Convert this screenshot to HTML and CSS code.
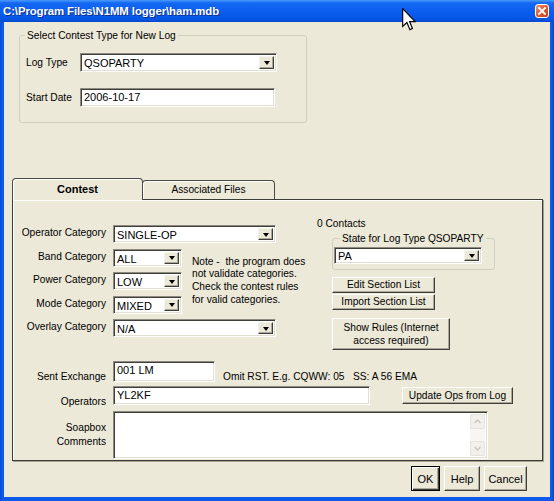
FILE: index.html
```html
<!DOCTYPE html>
<html>
<head>
<meta charset="utf-8">
<title>N1MM logger</title>
<link rel="stylesheet" href="styles.css">
</head>
<body>
<div class="window">
  <div class="titlebar">
    <span class="title">C:\Program Files\N1MM logger\ham.mdb</span>
    <span class="close"><svg width="8" height="8" viewBox="0 0 8 8"><path d="M1 1 L7 7 M7 1 L1 7" stroke="#fff" stroke-width="1.8" stroke-linecap="square"/></svg></span>
  </div>
  <div class="client">
    <fieldset class="group log-group">
      <legend>Select Contest Type for New Log</legend>
      <div class="form-grid">
        <span class="lbl">Log Type</span>
        <div class="combo combo-log"><span class="val">QSOPARTY</span><span class="drop"></span></div>
        <span class="lbl">Start Date</span>
        <div class="field field-date">2006-10-17</div>
      </div>
    </fieldset>

    <div class="tabs">
      <div class="tabstrip">
        <div class="tab tab-active">Contest</div>
        <div class="tab tab-files">Associated Files</div>
      </div>
      <div class="panel">
        <div class="upper">
          <div class="cats">
            <span class="cat-lbl r1">Operator Category</span>
            <div class="combo combo-wide r1"><span class="val">SINGLE-OP</span><span class="drop"></span></div>
            <span class="cat-lbl r2">Band Category</span>
            <div class="combo combo-small r2"><span class="val">ALL</span><span class="drop"></span></div>
            <p class="note">Note -&nbsp; the program does<br>not validate categories.<br>Check the contest rules<br>for valid categories.</p>
            <span class="cat-lbl r3">Power Category</span>
            <div class="combo combo-small r3"><span class="val">LOW</span><span class="drop"></span></div>
            <span class="cat-lbl r4">Mode Category</span>
            <div class="combo combo-small r4"><span class="val">MIXED</span><span class="drop"></span></div>
            <span class="cat-lbl r5">Overlay Category</span>
            <div class="combo combo-wide r5"><span class="val">N/A</span><span class="drop"></span></div>
          </div>
          <div class="side">
            <div class="contacts">0 Contacts</div>
            <fieldset class="group state-group">
              <legend>State for Log Type QSOPARTY</legend>
              <div class="combo combo-state"><span class="val">PA</span><span class="drop"></span></div>
            </fieldset>
            <button class="btn btn-section btn-edit">Edit Section List</button>
            <button class="btn btn-section btn-import">Import Section List</button>
            <button class="btn btn-rules">Show Rules (Internet<br>access required)</button>
          </div>
        </div>
        <div class="lower">
          <div class="row row-sent">
            <span class="row-lbl">Sent Exchange</span>
            <div class="field field-sent">001 LM</div>
            <span class="hint hint-omit">Omit RST. E.g. CQWW: 05</span>
            <span class="hint">SS: A 56 EMA</span>
          </div>
          <div class="row row-ops">
            <span class="row-lbl">Operators</span>
            <div class="field field-ops">YL2KF</div>
            <button class="btn btn-update">Update Ops from Log</button>
          </div>
          <div class="row row-soap">
            <span class="row-lbl">Soapbox<br>Comments</span>
            <div class="memo">
              <div class="memo-text"></div>
              <div class="vscroll">
                <span class="sb-btn"><svg width="7" height="5" viewBox="0 0 7 5"><path d="M0.5 4 L3.5 1 L6.5 4" fill="none" stroke="#C9C7BA" stroke-width="1.4"/></svg></span>
                <span class="sb-track"></span>
                <span class="sb-btn"><svg width="7" height="5" viewBox="0 0 7 5"><path d="M0.5 1 L3.5 4 L6.5 1" fill="none" stroke="#C9C7BA" stroke-width="1.4"/></svg></span>
              </div>
            </div>
          </div>
        </div>
      </div>
    </div>

    <div class="dlg-buttons">
      <button class="btn btn-default">OK</button>
      <button class="btn btn-help">Help</button>
      <button class="btn btn-cancel">Cancel</button>
    </div>
  </div>
  <svg class="cursor" width="14" height="23" viewBox="0 0 12 20"><path d="M0.5 0.5 L0.5 16 L4.2 12.6 L6.8 18.8 L9 17.8 L6.5 11.8 L11.3 11.8 Z" fill="#fff" stroke="#000" stroke-width="1" stroke-linejoin="miter"/></svg>
</div>
</body>
</html>
```

FILE: styles.css
```css
html, body {
  margin: 0;
  padding: 0;
  background: #0B52E0;
}
body {
  font-family: "Liberation Sans", Arial, sans-serif;
  font-size: 10.2px;
  color: #000;
}
.window {
  position: relative;
  width: 554px;
  height: 501px;
  box-sizing: border-box;
  display: flex;
  flex-direction: column;
  background: linear-gradient(to right, #0A47C8 0, #0B5AEC 2px, #0B5AEC 552px, #0A3FB8 554px);
  overflow: hidden;
}
.titlebar {
  flex: none;
  height: 22px;
  display: flex;
  align-items: center;
  padding: 0 5px 0 3px;
  background: linear-gradient(to bottom, #4A9AFB 0, #1468F2 3px, #0A5DEE 12px, #0656E6 19px, #0449CC 22px);
}
.title {
  flex: 1;
  color: #fff;
  font-weight: bold;
  font-size: 11.4px;
  letter-spacing: -0.1px;
  text-shadow: 1px 1px 0 #0A2F8C;
  margin-top: -1px;
}
.close {
  width: 14px;
  height: 14px;
  box-sizing: border-box;
  border: 1px solid #fff;
  border-radius: 3px;
  background: linear-gradient(to bottom right, #F0937A, #E05A35 50%, #C23E1C);
  display: flex;
  align-items: center;
  justify-content: center;
  margin-top: -1px;
}
.client {
  flex: 1;
  margin: 0 4px 4px 4px;
  background: #ECE9D8;
  display: flex;
  flex-direction: column;
}

/* group boxes */
.group {
  box-sizing: border-box;
  border: 1px solid #D0D0BF;
  border-radius: 3px;
  padding: 0;
  min-width: 0;
}
.group legend {
  padding: 0 2px;
  line-height: 13px;
  font-size: 10.2px;
}
.log-group {
  width: 288px;
  margin: 7px 0 0 15px;
  padding: 11px 0 15px 0;
}
.log-group legend { margin-left: 5px; }
.form-grid {
  display: grid;
  grid-template-columns: 54px auto;
  row-gap: 16px;
  margin-left: 6px;
  align-items: center;
}

/* sunken controls */
.combo, .field, .memo {
  box-sizing: border-box;
  background: #fff;
  border: 1px solid;
  border-color: #8E8C80 #FFFFFF #FFFFFF #8E8C80;
  box-shadow: inset 1px 1px 0 #3F3E38, inset -1px -1px 0 #E2DFD0;
}
.combo {
  display: flex;
  height: 19px;
  padding: 2px;
}
.combo .val {
  flex: 1;
  font-size: 11px;
  line-height: 14px;
  padding-left: 1px;
  white-space: nowrap;
}
.drop {
  flex: none;
  width: 15px;
  box-sizing: border-box;
  background: #ECE9D8;
  border: 1px solid;
  border-color: #F4F3EE #3F3E38 #3F3E38 #F4F3EE;
  box-shadow: inset -1px -1px 0 #ACA899;
  display: flex;
  align-items: center;
  justify-content: center;
}
.drop::after {
  content: "";
  width: 0;
  height: 0;
  border-left: 3.5px solid transparent;
  border-right: 3.5px solid transparent;
  border-top: 4px solid #000;
  margin-top: 1px;
}
.field {
  height: 19px;
  padding: 2px 3px;
  font-size: 11px;
  line-height: 13px;
}
.combo-log { width: 197px; }
.field-date { width: 195px; }

/* tabs */
.tabs {
  margin: 55px 0 0 8px;
}
.tabstrip {
  display: flex;
  align-items: flex-end;
  height: 21px;
}
.tab {
  box-sizing: border-box;
  border: 1px solid #4A4A44;
  border-bottom: none;
  border-radius: 4px 4px 0 0;
  background: #ECE9D8;
  box-shadow: inset 1px 1px 0 #fff;
  text-align: center;
  line-height: 13px;
}
.tab-active {
  position: relative;
  z-index: 1;
  width: 131px;
  height: 22px;
  margin-bottom: -1px;
  padding-top: 4px;
  font-weight: bold;
  font-size: 11px;
}
.tab-files {
  width: 133px;
  height: 19px;
  margin-left: -1px;
  padding-top: 2px;
}
.panel {
  width: 531px;
  height: 262px;
  box-sizing: border-box;
  border: 1px solid #3C3C36;
  box-shadow: inset 1px 1px 0 #fff, 1px 1px 0 #A5A293;
  background: #ECE9D8;
  display: flex;
  flex-direction: column;
}
.upper {
  display: flex;
  align-items: flex-start;
}
.cats {
  display: grid;
  grid-template-columns: 93px 69px 115px;
  grid-template-rows: repeat(5, 18px);
  column-gap: 7px;
  row-gap: 5.5px;
  margin-top: 25px;
}
.cat-lbl {
  grid-column: 1;
  text-align: right;
  align-self: center;
  white-space: nowrap;
  line-height: 13px;
  margin-top: -3px;
}
.r1 { grid-row: 1; }
.r2 { grid-row: 2; }
.r3 { grid-row: 3; }
.r4 { grid-row: 4; }
.r5 { grid-row: 5; }
.cats .combo { height: 18px; padding: 2px; grid-column: 2; }
.cats .combo-wide { grid-column: 2 / span 2; width: 163px; }
.combo-small { width: 69px; }
.note {
  grid-column: 3;
  grid-row: 2 / span 3;
  align-self: center;
  margin: 0 0 0 3px;
  line-height: 12.7px;
  white-space: nowrap;
}
.side {
  margin: 17px 0 0 13px;
  display: flex;
  flex-direction: column;
  align-items: flex-start;
}
.contacts { line-height: 13px; }
.state-group {
  width: 163px;
  margin: 2px 0 0 15px;
  padding: 2px 0 5px 1px;
}
.state-group legend { margin-left: 6px; }
.combo-state { width: 148px; height: 17px; padding: 2px; }
.combo-state .val { line-height: 13px; }

/* buttons */
.btn {
  box-sizing: border-box;
  margin: 0;
  padding: 0;
  font-family: "Liberation Sans", Arial, sans-serif;
  font-size: 10.2px;
  line-height: 12px;
  color: #000;
  background: #ECE9D8;
  border: 1px solid;
  border-color: #FFFFFF #3F3E38 #3F3E38 #FFFFFF;
  box-shadow: inset -1px -1px 0 #ACA899;
  text-align: center;
}
.btn-section { width: 103px; height: 16px; margin-left: 15px; }
.btn-edit { margin-top: 7px; }
.btn-import { margin-top: 1px; }
.btn-rules { width: 118px; height: 32px; margin: 8px 0 0 15px; line-height: 13px; }

.lower {
  margin-top: 11px;
  display: flex;
  flex-direction: column;
}
.row {
  display: flex;
  align-items: flex-start;
}
.row-lbl {
  flex: none;
  width: 93px;
  margin-right: 7px;
  text-align: right;
  line-height: 13px;
}
.row-sent .row-lbl { margin-top: 9px; }
.field-sent { width: 102px; height: 21px; }
.hint {
  margin-top: 9px;
  line-height: 13px;
  white-space: nowrap;
}
.hint-omit { width: 130px; margin-left: 8px; }
.row-ops { margin-top: 3px; }
.row-ops .row-lbl { margin-top: 9px; }
.field-ops { width: 257px; height: 19px; }
.btn-update { width: 111px; height: 17px; margin: 1px 0 0 32px; }
.row-soap { margin-top: 3px; }
.row-soap .row-lbl { margin-top: 10px; line-height: 13.5px; }
.memo {
  width: 375px;
  height: 48px;
  display: flex;
  padding: 2px;
}
.memo-text { flex: 1; }
.vscroll {
  flex: none;
  width: 15px;
  display: flex;
  flex-direction: column;
  background: #F7F6F2;
}
.sb-btn {
  flex: none;
  height: 15px;
  box-sizing: border-box;
  border: 1px solid #E4E3DC;
  border-radius: 2px;
  background: #F1F0EB;
  display: flex;
  align-items: center;
  justify-content: center;
}
.sb-track { flex: 1; }

.dlg-buttons {
  display: flex;
  justify-content: flex-end;
  gap: 4px;
  margin: 5px 23px 0 0;
}
.dlg-buttons .btn { height: 25px; font-size: 11px; }
.btn-default {
  width: 29px;
  border: 1px solid #000;
  box-shadow: inset 1px 1px 0 #fff, inset -1px -1px 0 #3F3E38, inset -2px -2px 0 #ACA899;
}
.btn-help { width: 36px; }
.btn-cancel { width: 43px; }

.cursor {
  position: absolute;
  left: 402px;
  top: 8px;
}
```
